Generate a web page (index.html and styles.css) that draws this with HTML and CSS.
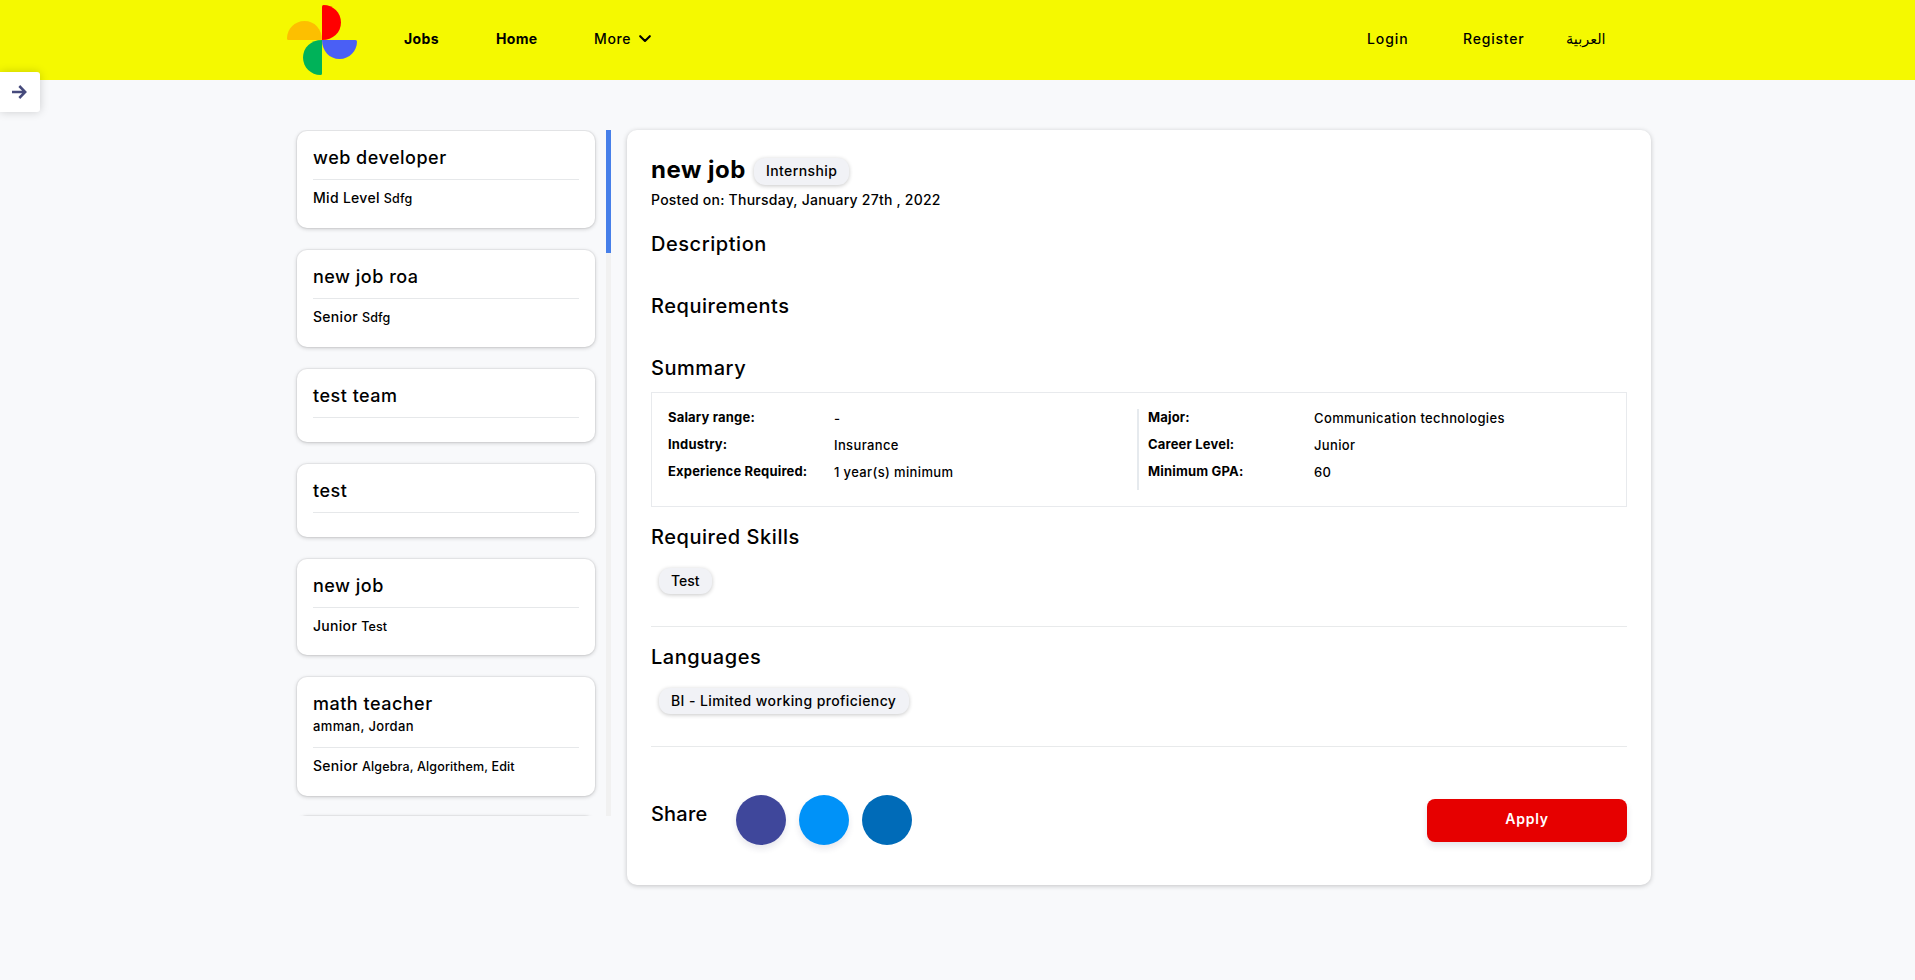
FILE: index.html
```html
<!DOCTYPE html>
<html lang="en">
<head>
<meta charset="utf-8">
<title>Jobs</title>
<link rel="stylesheet" href="styles.css">
</head>
<body>
<header class="topbar">
  <svg class="logo" width="70" height="70" viewBox="0 0 70 70">
    <path fill="#ff0000" d="M35 35V1.500Q35 0 36.500 0C46 0 54 7.500 54 17.500S46 35 35 35Z"/>
    <path fill="#fdbf00" d="M35 35H1.500Q0 35 0 33.500C0 24 7.500 16 17.500 16S35 24 35 35Z"/>
    <path fill="#4a5ff5" d="M35 35H68.500Q70 35 70 36.500C70 46 62.500 54 52.500 54S35 46 35 35Z"/>
    <path fill="#00b259" d="M35 35V68.500Q35 70 33.500 70C24 70 16 62.500 16 52.500S24 35 35 35Z"/>
  </svg>
  <nav class="nav">
    <a class="nav-link strong jobs">Jobs</a>
    <a class="nav-link strong home">Home</a>
    <a class="nav-link more">More
      <svg width="12" height="8" viewBox="0 0 12 8"><path d="M1.200 1.200L6 6L10.800 1.200" fill="none" stroke="#000" stroke-width="2.100" stroke-linecap="round" stroke-linejoin="round"/></svg>
    </a>
  </nav>
  <nav class="account">
    <a class="nav-link login">Login</a>
    <a class="nav-link register">Register</a>
    <a class="arabic" lang="ar">العربية</a>
  </nav>
</header>
<button class="drawer-toggle" aria-label="Open">
  <svg width="16" height="16" viewBox="0 0 16 16"><path d="M1 8H14M8.300 2L14.200 8L8.300 14" fill="none" stroke="#464a7c" stroke-width="2.500"/></svg>
</button>
<main class="page">
  <aside class="sidebar">
    <div class="job-list">
      <article class="job"><h2>web developer</h2><p class="meta"><span>Mid Level</span> <small>Sdfg</small></p></article>
      <article class="job"><h2>new job roa</h2><p class="meta"><span>Senior</span> <small>Sdfg</small></p></article>
      <article class="job"><h2>test team</h2><p class="meta empty"></p></article>
      <article class="job"><h2>test</h2><p class="meta empty"></p></article>
      <article class="job short"><h2>new job</h2><p class="meta"><span>Junior</span> <small>Test</small></p></article>
      <article class="job"><h2>math teacher</h2><p class="place">amman, Jordan</p><p class="meta"><span>Senior</span> <small>Algebra, Algorithem, Edit</small></p></article>
      <article class="job"></article>
    </div>
    <div class="scroll-track"><div class="scroll-thumb"></div></div>
  </aside>
  <section class="detail">
    <div class="title-row"><h1>new job</h1><span class="pill internship">Internship</span></div>
    <p class="posted">Posted on: Thursday, January 27th , 2022</p>
    <h3 class="heading description">Description</h3>
    <h3 class="heading requirements">Requirements</h3>
    <h3 class="heading summary-title">Summary</h3>
    <div class="summary">
      <dl class="facts">
        <dt>Salary range:</dt><dd>-</dd>
        <dt>Industry:</dt><dd>Insurance</dd>
        <dt>Experience Required:</dt><dd>1 year(s) minimum</dd>
      </dl>
      <dl class="facts right">
        <dt>Major:</dt><dd>Communication technologies</dd>
        <dt>Career Level:</dt><dd>Junior</dd>
        <dt>Minimum GPA:</dt><dd>60</dd>
      </dl>
    </div>
    <div class="block">
      <h3 class="heading">Required Skills</h3>
      <span class="pill test">Test</span>
    </div>
    <div class="block">
      <h3 class="heading">Languages</h3>
      <span class="pill language">BI - Limited working proficiency</span>
    </div>
    <footer class="actions">
      <h3 class="heading share">Share</h3>
      <a class="circle facebook"></a>
      <a class="circle twitter"></a>
      <a class="circle linkedin"></a>
      <button class="apply">Apply</button>
    </footer>
  </section>
</main>
</body>
</html>
```
FILE: styles.css
```css
* { box-sizing: border-box; }
body {
  margin: 0;
  min-height: 980px;
  background: #f8f9fb;
  color: #000;
  font-family: Inter, "Liberation Sans", sans-serif;
  font-weight: 500;
}
h1, h2, h3, p, dl, dd { margin: 0; }

.topbar {
  display: flex;
  align-items: center;
  height: 80px;
  padding: 0 309px 0 287px;
  background: #f5f900;
}
.logo { flex: none; }
.nav, .account { display: flex; align-items: center; }
.nav { margin-left: 47px; }
.nav-link {
  font-size: 14px;
  line-height: 20px;
  letter-spacing: 0.6px;
  white-space: nowrap;
  padding-bottom: 3px;
}
.strong { font-weight: 700; letter-spacing: 0.35px; }
.jobs { width: 92px; }
.home { width: 98px; }
.more { display: flex; align-items: center; gap: 8px; }
.account { margin-left: auto; }
.login { width: 96px; letter-spacing: 0.9px; }
.register { width: 103px; letter-spacing: 0.8px; }
.arabic {
  width: 40px;
  padding-bottom: 2px;
  font: 400 14.5px/20px "DejaVu Sans", sans-serif;
  white-space: nowrap;
}

.drawer-toggle {
  position: absolute;
  left: 0;
  top: 72px;
  width: 40px;
  height: 40px;
  padding: 0 0 0 11px;
  display: flex;
  align-items: center;
  border: 0;
  border-radius: 0 3px 3px 0;
  background: #fff;
  box-shadow: 0 0 10px rgba(0, 0, 0, 0.18);
}

.page {
  display: flex;
  align-items: flex-start;
  padding: 50px 264px 0 287px;
}
.sidebar { display: flex; width: 324px; height: 686px; margin-right: 16px; }
.job-list {
  flex: 1;
  overflow: hidden;
  padding: 1px 11px 0 10px;
}
.job {
  height: 97px;
  margin-bottom: 22px;
  padding: 16px 16px 0;
  border-radius: 10px;
  background: #fff;
  box-shadow: 0 1px 4px rgba(0, 0, 0, 0.2), 0 0 0 1px rgba(0, 0, 0, 0.04);
}
.job:has(.empty) { height: 73px; }
.job.short { height: 96px; }
.job:has(.place) { height: 119px; margin-bottom: 20px; }
.job h2 {
  font-size: 18px;
  line-height: 22px;
  font-weight: 500;
  letter-spacing: 0.5px;
}
.place { font-size: 13px; line-height: 20px; margin-top: 1px; letter-spacing: 0.35px; }
.meta {
  margin-top: 10px;
  border-top: 1px solid #e6e8ea;
  padding-top: 8px;
  font-size: 14px;
  line-height: 20px;
  letter-spacing: 0.3px;
  white-space: nowrap;
}
.place + .meta { margin-top: 11px; }
.meta small { font-size: 12.500px; letter-spacing: 0.15px; }
.scroll-track { width: 5px; background: #f1f1f1; }
.scroll-thumb { height: 123px; background: #467fe9; }

.detail {
  flex: 1;
  height: 755px;
  padding: 28px 24px 0;
  border-radius: 10px;
  background: #fff;
  box-shadow: 0 1px 5px rgba(0, 0, 0, 0.22);
}
.title-row { display: flex; align-items: flex-start; height: 27px; }
h1 {
  width: 103px;
  font-size: 24px;
  line-height: 24px;
  font-weight: 700;
  letter-spacing: 0.5px;
  white-space: nowrap;
}
.pill {
  display: block;
  width: max-content;
  height: 26px;
  padding: 0 12px;
  border-radius: 11px;
  background: #f1f2f6;
  box-shadow: 0 1px 4px rgba(0, 0, 0, 0.22);
  font-size: 14px;
  line-height: 26px;
  letter-spacing: 0.4px;
  white-space: nowrap;
}
.pill.internship { width: 95px; height: 27px; }
.pill.test { width: 53px; letter-spacing: 0; }
.pill.language { width: 250px; }
.posted { margin-top: 5px; font-size: 14px; line-height: 20px; letter-spacing: 0.24px; }
.heading { font-size: 20px; line-height: 24px; font-weight: 500; letter-spacing: 0.55px; }
.description { margin-top: 22px; }
.requirements, .summary-title { margin-top: 38px; }
.summary {
  display: flex;
  height: 115px;
  margin-top: 12px;
  padding: 16px;
  border: 1px solid #e8eaed;
}
.facts {
  display: grid;
  width: 469px;
  grid-template-columns: 166px 1fr;
  grid-template-rows: repeat(3, 27px);
  font-size: 13px;
}
.facts.right { width: 473px; padding-left: 9px; border-left: 2px solid #e6eaee; }
.facts dt { font-weight: 700; line-height: 17px; letter-spacing: 0.18px; }
.facts dd { line-height: 19px; letter-spacing: 0.37px; }
.block { height: 120px; padding-top: 18px; border-bottom: 1px solid #e8eaeb; }
.block .pill { margin: 19px 0 0 8px; }
.actions { display: flex; align-items: flex-start; padding-top: 48px; }
.share { width: 85px; margin-top: 7px; letter-spacing: 0.2px; }
.circle {
  width: 50px;
  height: 50px;
  margin-right: 13px;
  border-radius: 50%;
  box-shadow: 0 4px 6px rgba(50, 50, 93, 0.11);
}
.facebook { background: #3f479b; }
.twitter { background: #0092f8; }
.linkedin { background: #006bb8; box-shadow: none; }
.apply {
  width: 200px;
  height: 43px;
  margin: 4px 0 0 auto;
  padding: 0 0 3px;
  border: 0;
  border-radius: 8px;
  background: #e60000;
  box-shadow: 0 4px 6px rgba(50, 50, 93, 0.13);
  color: #fff;
  font: 600 14px/20px Inter, "Liberation Sans", sans-serif;
  letter-spacing: 0.8px;
}
```
